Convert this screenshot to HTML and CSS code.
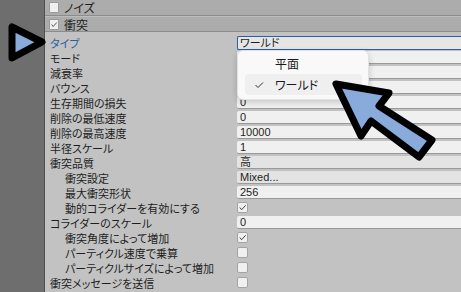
FILE: index.html
```html
<!DOCTYPE html>
<html>
<head>
    <meta charset="UTF-8">
    <title>衝突</title>
    <link rel="stylesheet" href="styles.css">
</head>
<body>
    <div class="side"></div>
    <div class="panel">
        <div class="head"><span class="hbox"></span>ノイズ</div>
        <div class="head"><span class="hbox"><svg viewBox="0 0 10 10"><polyline points="2,5 4,7.5 8.5,2.5"/></svg></span>衝突</div>

        <div class="props">
            <div class="prop"><span class="label active">タイプ</span><span class="field focus">ワールド</span></div>
            <div class="prop"><span class="label">モード</span><span class="field"></span></div>
            <div class="prop"><span class="label">減衰率</span><span class="field"></span></div>
            <div class="prop"><span class="label">バウンス</span><span class="field"></span></div>
            <div class="prop"><span class="label">生存期間の損失</span><span class="field">0</span></div>
            <div class="prop"><span class="label">削除の最低速度</span><span class="field">0</span></div>
            <div class="prop"><span class="label">削除の最高速度</span><span class="field">10000</span></div>
            <div class="prop"><span class="label">半径スケール</span><span class="field">1</span></div>
            <div class="prop"><span class="label">衝突品質</span><span class="field select">高</span></div>
            <div class="prop"><span class="label sub">衝突設定</span><span class="field select">Mixed...</span></div>
            <div class="prop"><span class="label sub">最大衝突形状</span><span class="field">256</span></div>
            <div class="prop"><span class="label sub">動的コライダーを有効にする</span><span class="check"><svg viewBox="0 0 10 10"><polyline points="2,5 4,7.5 8.5,2.5"/></svg></span></div>
            <div class="prop"><span class="label">コライダーのスケール</span><span class="field">0</span></div>
            <div class="prop"><span class="label sub">衝突角度によって増加</span><span class="check"><svg viewBox="0 0 10 10"><polyline points="2,5 4,7.5 8.5,2.5"/></svg></span></div>
            <div class="prop"><span class="label sub">パーティクル速度で乗算</span><span class="check"></span></div>
            <div class="prop"><span class="label sub">パーティクルサイズによって増加</span><span class="check"></span></div>
            <div class="prop"><span class="label">衝突メッセージを送信</span><span class="check"></span></div>
        </div>
    </div>

    <div class="popup">
        <div class="item">平面</div>
        <div class="item selected"><svg class="tick" viewBox="0 0 10 10"><polyline points="1.5,5 4,7.5 9,2.5"/></svg>ワールド</div>
    </div>

    <!-- callout arrows -->
    <svg class="marks" width="461" height="292" viewBox="0 0 461 292">
        <polygon points="12,27 12,58 42,42"/>
        <polygon points="336,84 389,93 379,106 432,140 419,157 371,121 361,136"/>
    </svg>
</body>
</html>
```

FILE: styles.css
```css
body {
    margin: 0;
    width: 461px;
    height: 292px;
    overflow: hidden;
    display: flex;
    position: relative;
    background: #c2c2c2;
    font-family: "Liberation Sans", "Noto Sans CJK JP", sans-serif;
    font-size: 11px;
    font-feature-settings: "palt";
    color: #1e1e1e;
}
.side {
    width: 44px;
    flex: none;
    background: #6e6e6e;
    border-right: 1px solid #505050;
}
.panel {
    flex: 1;
    display: flex;
    flex-direction: column;
}
.head {
    height: 15px;
    display: flex;
    align-items: center;
    gap: 5px;
    padding-left: 4px;
    background: #acacac;
    border-bottom: 1px solid #8c8c8c;
    font-size: 12px;
}
.head + .head {
    border-top: 1px solid #bcbcbc;
    height: 14px;
}
.hbox {
    width: 10px;
    height: 11px;
    box-sizing: border-box;
    background: #efefef;
    border: 1px solid #9a9a9a;
    border-radius: 1px;
    display: flex;
}
.props {
    padding-top: 3px;
}
.prop {
    height: 15px;
    display: grid;
    grid-template-columns: 192px 1fr;
    align-items: center;
}
.label {
    padding-left: 5px;
    white-space: nowrap;
    overflow: hidden;
}
.label.sub {
    padding-left: 20px;
}
.label.active {
    color: #2a5fa3;
}
.field {
    height: 13px;
    box-sizing: border-box;
    background: #f0f0f0;
    border-bottom: 1px solid #999;
    border-radius: 2px 0 0 2px;
    padding-left: 3px;
    line-height: 12px;
    white-space: nowrap;
}
.field.select {
    background: #e3e3e3;
}
.field.focus {
    height: 14px;
    border: 1px solid #2d5f9c;
    border-right: none;
    padding-left: 2px;
    background: #e6e6e6;
}
.check {
    width: 11px;
    height: 11px;
    box-sizing: border-box;
    background: #f0f0f0;
    border: 1px solid #a4a4a4;
    border-radius: 2px;
    display: flex;
}
.hbox svg, .check svg {
    width: 9px;
    height: 9px;
}
polyline {
    fill: none;
    stroke: #333;
    stroke-width: 1;
}
.popup {
    position: absolute;
    left: 237px;
    top: 50px;
    width: 132px;
    box-sizing: border-box;
    padding: 2px 6px 4px 7px;
    background: #f9f9f9;
    border: 1px solid #e2e2e2;
    border-radius: 6px;
    box-shadow: 0 2px 6px rgba(0, 0, 0, 0.18);
    font-family: "Noto Sans CJK JP", sans-serif;
    font-size: 12px;
    color: #1a1a1a;
}
.item {
    height: 21px;
    line-height: 21px;
    padding-left: 30px;
    position: relative;
    border-radius: 4px;
}
.item.selected {
    background: #efefef;
}
.tick {
    position: absolute;
    left: 9px;
    top: 6px;
    width: 10px;
    height: 10px;
}
.marks {
    position: absolute;
    left: 0;
    top: 0;
    pointer-events: none;
}
.marks polygon {
    fill: #88abdc;
    stroke: #000;
    stroke-width: 7;
    stroke-linejoin: round;
}
```
